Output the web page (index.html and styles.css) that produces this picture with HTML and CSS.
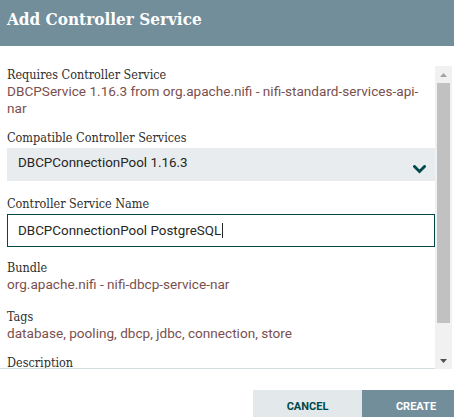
FILE: index.html
```html
<!DOCTYPE html>
<html lang="en">
<head>
<meta charset="utf-8">
<title>Add Controller Service</title>
<link rel="stylesheet" href="styles.css">
</head>
<body>
<div class="dialog">
  <div class="header"><h1 class="title">Add Controller Service</h1></div>
  <div class="body">
    <div class="scroll">
      <div class="content">
        <div class="field">
          <div class="label">Requires Controller Service</div>
          <div class="value">DBCPService 1.16.3 from org.apache.nifi - nifi-standard-services-api-nar</div>
        </div>
        <div class="field">
          <div class="label">Compatible Controller Services</div>
          <div class="control select">
            <span class="control-text">DBCPConnectionPool 1.16.3</span>
            <svg class="chevron" width="13" height="9" viewBox="0 0 13 9"><polyline points="1.5,1.5 6.5,6.5 11.5,1.5" fill="none" stroke="#004849" stroke-width="2.8" stroke-linecap="square"/></svg>
          </div>
        </div>
        <div class="field field-loose">
          <div class="label">Controller Service Name</div>
          <div class="control input"><span class="control-text">DBCPConnectionPool PostgreSQL</span><span class="caret"></span></div>
        </div>
        <div class="field">
          <div class="label">Bundle</div>
          <div class="value">org.apache.nifi - nifi-dbcp-service-nar</div>
        </div>
        <div class="field field-looser">
          <div class="label">Tags</div>
          <div class="value">database, pooling, dbcp, jdbc, connection, store</div>
        </div>
        <div class="field">
          <div class="label">Description</div>
        </div>
      </div>
      <div class="scrollbar">
        <div class="sb-btn"><svg width="7" height="4" viewBox="0 0 7 4"><polygon points="0,4 3.5,0 7,4" fill="#a3a3a3"/></svg></div>
        <div class="sb-track"><div class="sb-thumb"></div></div>
        <div class="sb-btn"><svg width="7" height="4" viewBox="0 0 7 4"><polygon points="0,0 7,0 3.5,4" fill="#505050"/></svg></div>
      </div>
    </div>
  </div>
  <div class="buttons">
    <button class="btn cancel">Cancel</button>
    <button class="btn create">Create</button>
  </div>
</div>
</body>
</html>
```

FILE: styles.css
```css
html, body {
  margin: 0;
  padding: 0;
  overflow: hidden;
  background: #ffffff;
}

.dialog {
  width: 470px;
}

.header {
  height: 46px;
  background: #728e9b;
  padding: 0 7px;
  box-sizing: border-box;
}

.title {
  margin: 0;
  padding-top: 7px;
  font-family: "DejaVu Serif Condensed", "DejaVu Serif", serif;
  font-stretch: condensed;
  font-weight: bold;
  font-size: 17px;
  line-height: 24px;
  color: #ffffff;
}

.body {
  padding: 20px 18px 0 0;
}

.scroll {
  display: flex;
  height: 303px;
}

.content {
  flex: 1;
  min-width: 0;
  overflow: hidden;
  border-bottom: 1px solid #d5dde1;
  padding-left: 7px;
}

.field + .field {
  margin-top: 12px;
}

.field + .field-loose {
  margin-top: 14px;
}

.field + .field-looser {
  margin-top: 15px;
}

.label {
  font-family: "DejaVu Serif Condensed", "DejaVu Serif", serif;
  font-stretch: condensed;
  font-size: 12.5px;
  line-height: 17px;
  color: #2e2e2e;
}

.value {
  font-family: Roboto, "Liberation Sans", sans-serif;
  font-size: 13.6px;
  line-height: 17px;
  color: #7a504e;
  padding-right: 8px;
}

.control {
  margin-top: 2px;
  height: 33px;
  box-sizing: border-box;
  display: flex;
  align-items: center;
  font-family: Roboto, "Liberation Sans", sans-serif;
  font-size: 13.4px;
  color: #262626;
}

.select {
  background: #e8ecee;
  justify-content: space-between;
  padding: 0 9px 0 11px;
}

.select .control-text {
  margin-bottom: 4px;
}

.chevron {
  margin-top: 9px;
}

.input {
  border: 1px solid #004849;
  padding-left: 10px;
}

.caret {
  width: 1px;
  height: 15px;
  background: #262626;
  margin-left: 1px;
}

.scrollbar {
  width: 17px;
  display: flex;
  flex-direction: column;
  background: #f1f1f1;
}

.sb-btn {
  height: 17px;
  display: flex;
  align-items: center;
  justify-content: center;
}

.sb-track {
  flex: 1;
}

.sb-thumb {
  height: 240px;
  margin: 0 2px;
  background: #c1c1c1;
}

.buttons {
  display: flex;
  justify-content: flex-end;
  padding-top: 21px;
}

.btn {
  height: 32px;
  border: 0;
  margin: 0;
  padding: 0;
  font-family: Roboto, "Liberation Sans", sans-serif;
  font-weight: bold;
  font-size: 11px;
  text-transform: uppercase;
}

.cancel {
  width: 109px;
  background: #e3e8eb;
  color: #004849;
}

.create {
  width: 108px;
  background: #728e9b;
  color: #ffffff;
}
```
